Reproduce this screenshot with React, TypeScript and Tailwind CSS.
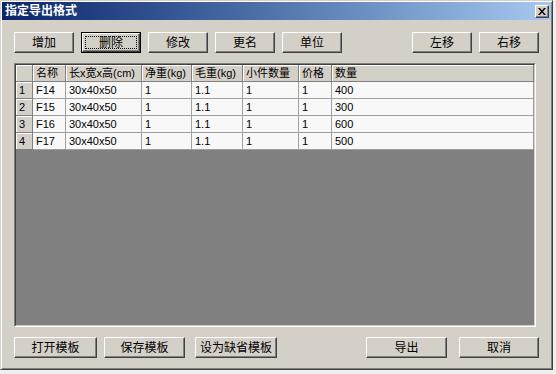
import type { ReactNode } from "react";

const cjk = "font-['Tahoma','Liberation_Sans','Noto_Sans_CJK_SC',sans-serif]";

const columns = [
  { label: "", width: "w-[17px]" },
  { label: "名称", width: "w-[33px]" },
  { label: "长x宽x高(cm)", width: "w-[76px]" },
  { label: "净重(kg)", width: "w-[50px]" },
  { label: "毛重(kg)", width: "w-[51px]" },
  { label: "小件数量", width: "w-[56px]" },
  { label: "价格", width: "w-[33px]" },
  { label: "数量", width: "flex-1" },
];

const rows = [
  ["1", "F14", "30x40x50", "1", "1.1", "1", "1", "400"],
  ["2", "F15", "30x40x50", "1", "1.1", "1", "1", "300"],
  ["3", "F16", "30x40x50", "1", "1.1", "1", "1", "600"],
  ["4", "F17", "30x40x50", "1", "1.1", "1", "1", "500"],
];

function Button({
  children,
  width,
  focused,
}: {
  children: ReactNode;
  width: string;
  focused?: boolean;
}) {
  if (focused) {
    return (
      <div className={`${width} h-[21px] border border-black bg-[#d4d0c8]`}>
        <div className="relative flex h-full items-center justify-center border border-t-white border-l-white border-r-[#404040] border-b-[#404040] text-[12px] text-black shadow-[inset_-1px_-1px_#808080]">
          {children}
          <div className="absolute inset-x-[2px] inset-y-[2px] border border-dotted border-black" />
        </div>
      </div>
    );
  }
  return (
    <div
      className={`${width} flex h-[21px] items-center justify-center border border-t-white border-l-white border-r-[#404040] border-b-[#404040] bg-[#d4d0c8] text-[12px] text-black shadow-[inset_-1px_-1px_#808080]`}
    >
      {children}
    </div>
  );
}

export default function App() {
  return (
    <div className={`h-[374px] w-[556px] bg-[#efefef] ${cjk}`}>
      <div className="flex h-[370px] w-[553px] flex-col border border-t-[#d4d0c8] border-l-[#d4d0c8] border-r-[#404040] border-b-[#404040] bg-[#d4d0c8] p-[1px] shadow-[inset_1px_1px_white,inset_-1px_-1px_#808080]">
        <div className="flex h-[18px] items-center justify-between bg-gradient-to-r from-[#0a246a] to-[#a6caf0] pl-[3px] pr-[2px]">
          <span className="text-[12px] leading-none font-bold text-white">指定导出格式</span>
          <div className="flex h-[13px] w-[14px] items-center justify-center border border-t-white border-l-white border-r-[#404040] border-b-[#404040] bg-[#d4d0c8] shadow-[inset_-1px_-1px_#808080]">
            <svg width="8" height="7" viewBox="0 0 8 7">
              <path d="M0 0h2l2 2.5L6 0h2L5 3.5 8 7H6L4 4.5 2 7H0l3-3.5z" fill="black" />
            </svg>
          </div>
        </div>

        <div className="mt-[12px] flex pl-[12px] pr-[12px]">
          <div className="flex gap-[7px]">
            <Button width="w-[60px]">增加</Button>
            <Button width="w-[60px]" focused>
              删除
            </Button>
            <Button width="w-[60px]">修改</Button>
            <Button width="w-[60px]">更名</Button>
            <Button width="w-[60px]">单位</Button>
          </div>
          <div className="ml-auto flex gap-[7px]">
            <Button width="w-[60px]">左移</Button>
            <Button width="w-[60px]">右移</Button>
          </div>
        </div>

        <div className="mt-[10px] ml-[12px] h-[264px] w-[522px] border border-t-[#808080] border-l-[#808080] border-r-white border-b-white">
          <div className="h-full w-full border border-t-[#404040] border-l-[#404040] border-r-[#d4d0c8] border-b-[#d4d0c8] bg-[#808080]">
            <div className="flex h-[17px]">
              {columns.map((c, i) => (
                <div
                  key={i}
                  className={`${c.width} flex items-center overflow-hidden border-r border-b border-r-[#808080] border-b-[#808080] bg-[#d4d0c8] pl-[3px] text-[11px] whitespace-nowrap text-black shadow-[inset_1px_1px_white]`}
                >
                  {c.label}
                </div>
              ))}
            </div>
            {rows.map((r, ri) => (
              <div key={ri} className="flex h-[17px]">
                {r.map((v, ci) =>
                  ci === 0 ? (
                    <div
                      key={ci}
                      className={`${columns[ci].width} flex items-center border-r border-b border-r-[#808080] border-b-[#808080] bg-[#d4d0c8] pl-[3px] font-['Tahoma','Liberation_Sans',sans-serif] text-[11px] text-black shadow-[inset_1px_1px_white]`}
                    >
                      {v}
                    </div>
                  ) : (
                    <div
                      key={ci}
                      className={`${columns[ci].width} flex items-center border-r border-b border-r-[#a0a0a0] border-b-[#a0a0a0] bg-[#f8f8f8] pl-[3px] font-['Tahoma','Liberation_Sans',sans-serif] text-[11px] text-black`}
                    >
                      {v}
                    </div>
                  ),
                )}
              </div>
            ))}
          </div>
        </div>

        <div className="mt-[10px] flex pl-[12px]">
          <Button width="w-[83px]">打开模板</Button>
          <div className="ml-[7px]">
            <Button width="w-[81px]">保存模板</Button>
          </div>
          <div className="ml-[10px]">
            <Button width="w-[82px]">设为缺省模板</Button>
          </div>
          <div className="ml-[89px]">
            <Button width="w-[81px]">导出</Button>
          </div>
          <div className="ml-[12px]">
            <Button width="w-[80px]">取消</Button>
          </div>
        </div>
      </div>
    </div>
  );
}
